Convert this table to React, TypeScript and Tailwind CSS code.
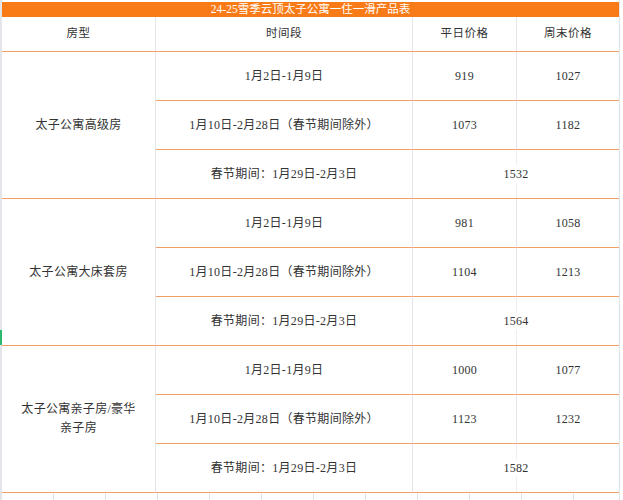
const ORANGE = "border-[#f3a066]";

type Period = { label: string; weekday?: string; weekend?: string; merged?: string };
type Room = { name: React.ReactNode; periods: Period[] };

const rooms: Room[] = [
  {
    name: "太子公寓高级房",
    periods: [
      { label: "1月2日-1月9日", weekday: "919", weekend: "1027" },
      { label: "1月10日-2月28日（春节期间除外）", weekday: "1073", weekend: "1182" },
      { label: "春节期间：1月29日-2月3日", merged: "1532" },
    ],
  },
  {
    name: "太子公寓大床套房",
    periods: [
      { label: "1月2日-1月9日", weekday: "981", weekend: "1058" },
      { label: "1月10日-2月28日（春节期间除外）", weekday: "1104", weekend: "1213" },
      { label: "春节期间：1月29日-2月3日", merged: "1564" },
    ],
  },
  {
    name: "太子公寓亲子房/豪华亲子房",
    periods: [
      { label: "1月2日-1月9日", weekday: "1000", weekend: "1077" },
      { label: "1月10日-2月28日（春节期间除外）", weekday: "1123", weekend: "1232" },
      { label: "春节期间：1月29日-2月3日", merged: "1582" },
    ],
  },
];

function Cell({ children, className = "" }: { children?: React.ReactNode; className?: string }) {
  return (
    <div className={`flex items-center justify-center text-center border-b ${ORANGE} ${className}`}>
      {children}
    </div>
  );
}

export default function App() {
  return (
    <div
      className="relative w-[623px] h-[500px] overflow-hidden bg-white text-[#333] pl-[2px] pt-[2px]"
      style={{ fontFamily: '"Liberation Serif", "Noto Sans CJK SC", serif' }}
    >
      {/* sheet edge + row marker */}
      <div className="absolute left-0 top-0 h-full w-[2px] bg-[#e4e5ea]" />
      <div className="absolute left-0 top-[330px] h-[15px] w-[2px] bg-[#2db870]" />
      <div className="absolute left-[619px] top-0 h-full w-[1px] bg-[#e2e3e8]" />

      <div className="w-[617px]">
        <div className="h-[15px] bg-[#f97b17] text-white text-[11.5px] leading-[15px] text-center">
          24-25雪季云顶太子公寓一住一滑产品表
        </div>

        <div className={`grid grid-cols-[154px_257px_104px_102px] h-[35px] border-b ${ORANGE} text-[11.5px] tracking-[0.5px]`}>
          <div className="flex items-center justify-center border-r border-[#e4e5ea]">房型</div>
          <div className="flex items-center justify-center border-r border-[#e4e5ea]">时间段</div>
          <div className="flex items-center justify-center border-r border-[#e4e5ea]">平日价格</div>
          <div className="flex items-center justify-center">周末价格</div>
        </div>

        <div className="grid grid-cols-[154px_257px_104px_102px] grid-rows-[repeat(9,49px)] text-[12px] tracking-[0.3px]">
          {rooms.map((room, i) => (
            <RoomBlock key={i} room={room} start={i * 3 + 1} />
          ))}
        </div>

        {/* spreadsheet grid below the table */}
        <div className="h-[10px] -ml-[1px] bg-[repeating-linear-gradient(to_right,#e3e4ea_0_1px,transparent_1px_52px)]" />
      </div>
    </div>
  );
}

function RoomBlock({ room, start }: { room: Room; start: number }) {
  const rowStart = ["row-start-1", "row-start-4", "row-start-7"][(start - 1) / 3];
  return (
    <>
      <Cell className={`${rowStart} row-span-3 col-start-1 border-r border-r-[#e4e5ea] px-[18px] leading-[19px]`}>
        {room.name}
      </Cell>
      {room.periods.map((p, j) => (
        <PeriodRow key={j} p={p} />
      ))}
    </>
  );
}

function PeriodRow({ p }: { p: Period }) {
  return (
    <>
      <Cell className="col-start-2 border-r border-r-[#e4e5ea]">{p.label}</Cell>
      {p.merged ? (
        <Cell className="col-span-2 bg-[linear-gradient(to_right,transparent_103px,#eceef2_103px,#eceef2_104px,transparent_104px)]">
          <span className="bg-white px-[1px]">{p.merged}</span>
        </Cell>
      ) : (
        <>
          <Cell className="border-r border-r-[#e4e5ea]">{p.weekday}</Cell>
          <Cell>{p.weekend}</Cell>
        </>
      )}
    </>
  );
}
